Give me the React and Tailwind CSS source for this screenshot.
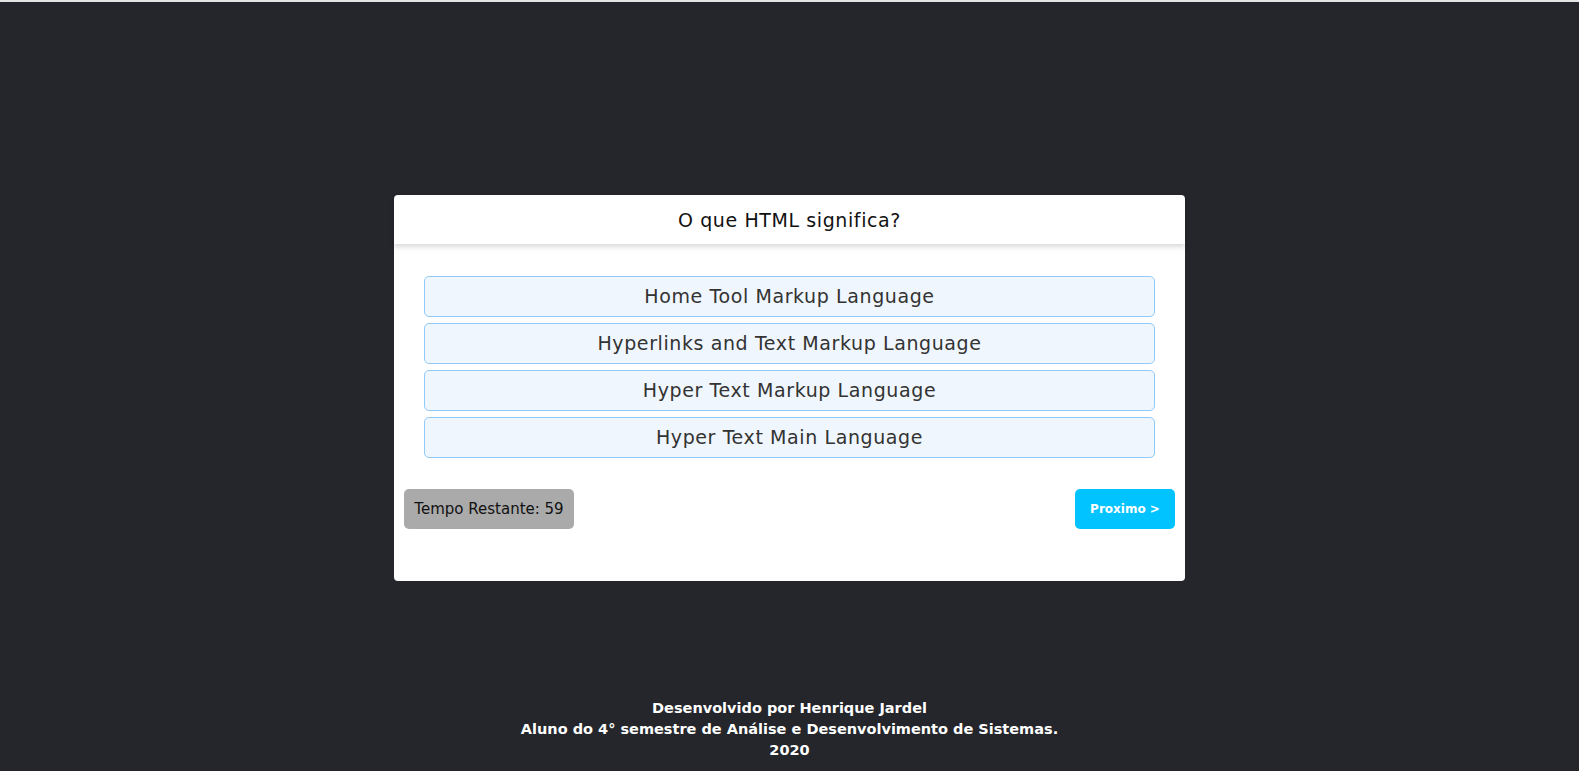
import React from 'react';

const options = [
    'Home Tool Markup Language',
    'Hyperlinks and Text Markup Language',
    'Hyper Text Markup Language',
    'Hyper Text Main Language',
];

const App = () => {
    return (
        <div className="min-h-screen bg-[#25262b] flex flex-col font-['DejaVu_Sans',sans-serif]">
            <div className="h-[2px] bg-[#e4e4e4]" />

            <main className="flex justify-center pt-[193px]">
                <div className="w-[791px] h-[386px] bg-white rounded-[4px] flex flex-col">
                    <div className="h-[49px] pt-[2px] flex items-center justify-center shadow-[0_3px_5px_rgba(0,0,0,0.15)] text-[19px] tracking-[0.6px] text-[#111]">
                        O que HTML significa?
                    </div>

                    <div className="px-[30px] pt-[32px] flex flex-col gap-[6px]">
                        {options.map((opt) => (
                            <button
                                key={opt}
                                className="h-[41px] w-full rounded-[5px] border border-[#90caf9] bg-[#eff6fd] text-[19px] tracking-[0.6px] text-[#333] flex items-center justify-center"
                            >
                                {opt}
                            </button>
                        ))}
                    </div>

                    <div className="px-[10px] pt-[31px] flex justify-between">
                        <div className="h-[40px] w-[170px] rounded-[5px] bg-[#aaaaaa] flex items-center justify-center text-[15px] text-[#111]">
                            Tempo Restante: 59
                        </div>
                        <button className="h-[40px] w-[100px] rounded-[5px] bg-[#00c3ff] text-white text-[12px] font-bold flex items-center justify-center">
                            Proximo &gt;
                        </button>
                    </div>
                </div>
            </main>

            <footer className="mt-auto pb-[10px] text-center text-white text-[14.5px] font-bold leading-[21px]">
                <div>Desenvolvido por Henrique Jardel</div>
                <div>Aluno do 4° semestre de Análise e Desenvolvimento de Sistemas.</div>
                <div>2020</div>
            </footer>
        </div>
    );
};

export default App;
